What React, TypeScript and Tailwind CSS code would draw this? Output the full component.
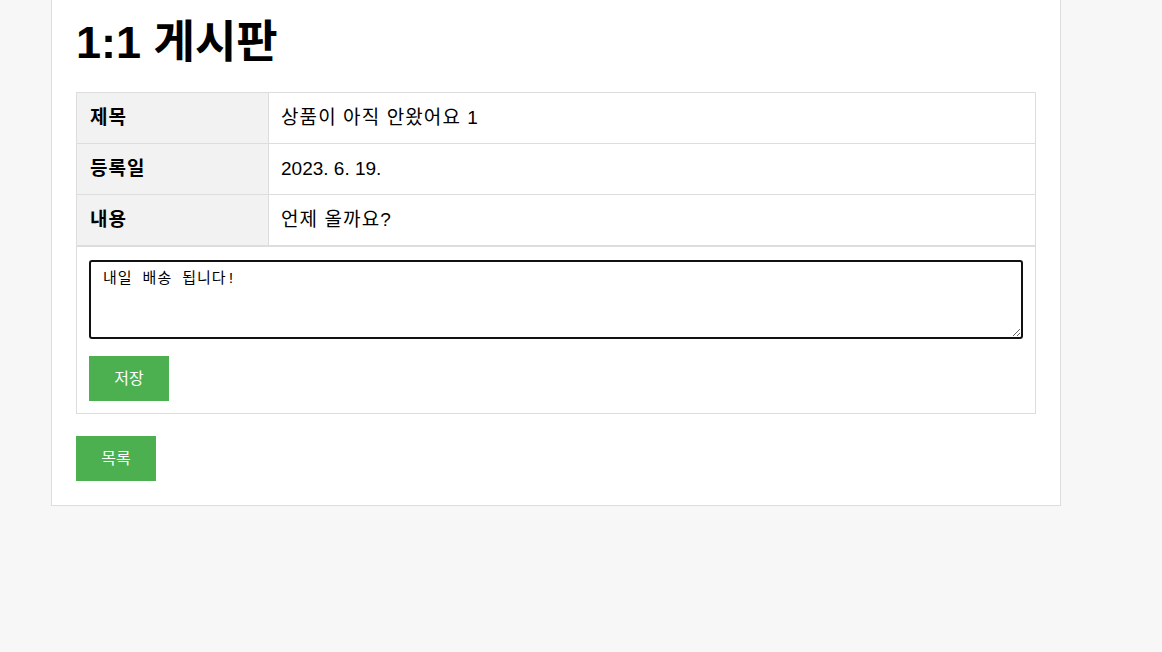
import React from "react";

const rows = [
  { k: "제목", v: "상품이 아직 안왔어요 1", ko: true },
  { k: "등록일", v: "2023. 6. 19.", ko: false },
  { k: "내용", v: "언제 올까요?", ko: true },
];

export default function App() {
  return (
    <div
      className="min-h-screen bg-[#f7f7f7] text-black"
      style={{ fontFamily: '"Liberation Sans", Arial, "Noto Sans CJK KR", sans-serif' }}
    >
      <div className="ml-[51px] w-[1010px] border-x border-b border-[#dddddd] bg-white px-[24px] pt-[15px] pb-[24px]">
        <h1 className="m-0 mb-[22px] text-[45px] font-bold leading-[55px]">1:1 게시판</h1>
        <table className="w-full border-collapse">
          <tbody>
            {rows.map((r) => (
              <tr key={r.k}>
                <th className="w-[192px] border border-[#dddddd] bg-[#f2f2f2] px-[13px] py-[12px] text-left text-[19px] font-bold leading-[26px] tracking-[1px]">
                  {r.k}
                </th>
                <td
                  className={
                    r.ko
                      ? "border border-[#dddddd] px-[12px] py-[12px] text-left text-[19px] leading-[26px] tracking-[1.1px]"
                      : "border border-[#dddddd] px-[12px] py-[12px] text-left text-[19px] leading-[26px]"
                  }
                >
                  {r.v}
                </td>
              </tr>
            ))}
          </tbody>
        </table>
        <div className="border border-[#dddddd] px-[12px] pt-[13px] pb-[12px]">
          <textarea
            defaultValue="내일 배송 됩니다!"
            className="block h-[79px] w-full rounded-[3px] border-2 border-[#111111] px-[12px] py-[9px] text-[15px] leading-[18px] tracking-[1px] outline-none"
            style={{ fontFamily: '"Liberation Mono", "Noto Sans CJK KR", monospace' }}
          />
          <button className="mt-[17px] flex h-[45px] w-[80px] items-center justify-center bg-[#4caf50] text-[16px] text-white">
            저장
          </button>
        </div>
        <button className="mt-[22px] flex h-[45px] w-[80px] items-center justify-center bg-[#4caf50] text-[16px] text-white">
          목록
        </button>
      </div>
    </div>
  );
}
